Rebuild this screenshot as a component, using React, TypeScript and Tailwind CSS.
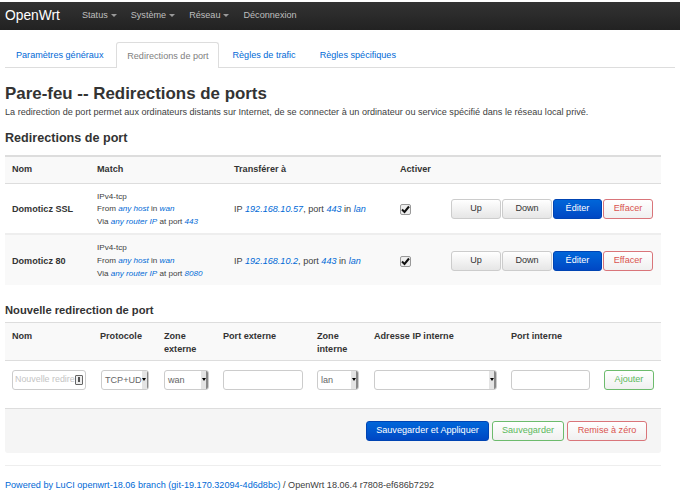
import type { ReactNode } from 'react';

const navItems = [
  { label: 'Status', caret: true },
  { label: 'Système', caret: true },
  { label: 'Réseau', caret: true },
  { label: 'Déconnexion', caret: false },
];

const rules = [
  { name: 'Domoticz SSL', port: '443', ip: '192.168.10.57' },
  { name: 'Domoticz 80', port: '8080', ip: '192.168.10.2' },
];

const btnBase =
  'flex h-[20px] items-center justify-center rounded-[3px] border text-[9.1px] leading-none';
const btnDefault = `${btnBase} border-[#ccc] bg-gradient-to-b from-white to-[#e6e6e6] text-[#333]`;
const btnBlue = `${btnBase} border-[#0044b3] bg-gradient-to-b from-[#0066d9] to-[#0047c4] text-white`;
const btnRed = `${btnBase} border-[#d9757a] bg-gradient-to-b from-white to-[#f0f0f0] text-[#d9534f]`;
const btnGreen = `${btnBase} border-[#6dbb6d] bg-gradient-to-b from-white to-[#f0f0f0] text-[#5cb85c]`;

function Em({ children }: { children: ReactNode }) {
  return <em className="text-[#0069d6]">{children}</em>;
}

function Check() {
  return (
    <div className="flex h-[11px] w-[11px] items-center justify-center rounded-[2px] border border-[#999] bg-[#eee]">
      <svg width="9" height="9" viewBox="0 0 9 9">
        <path d="M1 4.5 L3.5 7 L8 1.5" fill="none" stroke="#111" strokeWidth="2" />
      </svg>
    </div>
  );
}

function FakeSelect({ text, width }: { text: string; width: string }) {
  return (
    <div className={`flex h-[20px] items-stretch overflow-hidden rounded-[3px] border border-[#ccc] bg-white ${width}`}>
      <span className="flex-1 whitespace-nowrap pl-[3px] text-[9.1px] leading-[19px] text-[#666]">{text}</span>
      <span className="flex w-[7px] shrink-0 items-center justify-center border-r-2 border-[#888] bg-[#e4e4e4]">
        <span className="h-0 w-0 border-x-[2px] border-t-[3px] border-x-transparent border-t-black" />
      </span>
    </div>
  );
}

const inputCls = 'h-[20px] rounded-[3px] border border-[#ccc] bg-white';
const thCls = 'px-[7px] pt-[7px] text-left align-top text-[9.1px] font-bold leading-[12.5px] text-[#333]';
const headCls = 'px-[7px] text-left text-[9.1px] font-bold text-[#333]';

export default function App() {
  return (
    <div className="h-[500px] w-[680px] overflow-hidden bg-white font-['Liberation_Sans',sans-serif] text-[#404040]">
      {/* Top bar */}
      <div className="mt-[2px] flex h-[28px] items-center bg-gradient-to-b from-[#333] to-[#222] pl-[5px]">
        <span className="mr-[22px] text-[13.8px] leading-none text-white">OpenWrt</span>
        <div className="flex gap-[14px]">
          {navItems.map((item) => (
            <span key={item.label} className="flex items-center gap-[3px] text-[9.1px] text-[#bfbfbf]">
              {item.label}
              {item.caret && <span className="h-0 w-0 border-x-[3px] border-t-[3px] border-x-transparent border-t-[#999]" />}
            </span>
          ))}
        </div>
      </div>

      {/* Tabs */}
      <div className="mx-[5px] mt-[12px] flex h-[26px] border-b border-[#ddd] text-[9.1px]">
        <span className="ml-[11px] mt-[7px] text-[#0069d6]">Paramètres généraux</span>
        <span className="ml-[13px] h-[26px] w-[103px] rounded-t-[3px] border border-b-0 border-[#ddd] bg-white pt-[7px] text-center text-[#808080]">Redirections de port</span>
        <span className="ml-[13px] mt-[7px] text-[#0069d6]">Règles de trafic</span>
        <span className="ml-[24px] mt-[7px] text-[#0069d6]">Règles spécifiques</span>
      </div>

      <h1 className="mx-[5px] mt-[14px] text-[16.9px] font-bold leading-[24px] text-[#333]">Pare-feu -- Redirections de ports</h1>
      <p className="mx-[5px] whitespace-nowrap text-[9.1px] leading-[13px] text-[#404040]">
        La redirection de port permet aux ordinateurs distants sur Internet, de se connecter à un ordinateur ou service spécifié dans le réseau local privé.
      </p>

      <h3 className="mx-[5px] mt-[10px] text-[12.6px] font-bold leading-[18px] text-[#333]">Redirections de port</h3>

      {/* Rules table */}
      <table className="ml-[5px] mt-[8px] w-[656px] table-fixed border-collapse">
        <colgroup>
          <col className="w-[85px]" />
          <col className="w-[137px]" />
          <col className="w-[166px]" />
          <col className="w-[51px]" />
          <col />
        </colgroup>
        <thead>
          <tr className="h-[27px] border-y-2 border-[#ddd] border-b-[1px] bg-[#f9f9f9]">
            <th className={headCls}>Nom</th>
            <th className={headCls}>Match</th>
            <th className={headCls}>Transférer à</th>
            <th className={headCls}>Activer</th>
            <th />
          </tr>
        </thead>
        <tbody>
          {rules.map((rule, i) => (
            <tr key={rule.name} className={i === 1 ? 'h-[51px] bg-[#f9f9f9]' : 'h-[51px] border-b-2 border-[#eee]'}>
              <td className="px-[7px] pt-[3px] text-[9.1px] font-bold text-[#333]">{rule.name}</td>
              <td className="px-[7px] pt-[3px] text-[8.1px] leading-[12.7px]">
                <div>IPv4-tcp</div>
                <div>From <Em>any host</Em> in <Em>wan</Em></div>
                <div className="whitespace-nowrap">Via <Em>any router IP</Em> at port <Em>{rule.port}</Em></div>
              </td>
              <td className="whitespace-nowrap px-[7px] pt-[3px] text-[9.1px]">
                IP <Em>{rule.ip}</Em>, port <Em>443</Em> in <Em>lan</Em>
              </td>
              <td className="px-[7px] pt-[3px]"><Check /></td>
              <td className="px-[7px] pt-[1px]">
                <div className="flex gap-[1px]">
                  <span className={`${btnDefault} w-[50px]`}>Up</span>
                  <span className={`${btnDefault} w-[50px]`}>Down</span>
                  <span className={`${btnBlue} w-[49px]`}>Éditer</span>
                  <span className={`${btnRed} w-[50px]`}>Effacer</span>
                </div>
              </td>
            </tr>
          ))}
        </tbody>
      </table>

      <h3 className="mx-[5px] mt-[17px] text-[11.2px] font-bold leading-[16px] text-[#333]">Nouvelle redirection de port</h3>

      {/* New rule table */}
      <table className="ml-[5px] mt-[4px] w-[656px] table-fixed border-collapse">
        <colgroup>
          <col className="w-[88px]" />
          <col className="w-[64px]" />
          <col className="w-[59px]" />
          <col className="w-[94px]" />
          <col className="w-[57px]" />
          <col className="w-[137px]" />
          <col className="w-[93px]" />
          <col />
        </colgroup>
        <thead>
          <tr className="h-[38px] border-y border-[#ddd] bg-[#f9f9f9]">
            <th className={thCls}>Nom</th>
            <th className={thCls}>Protocole</th>
            <th className={thCls}>Zone externe</th>
            <th className={thCls}>Port externe</th>
            <th className={thCls}>Zone interne</th>
            <th className={thCls}>Adresse IP interne</th>
            <th className={thCls}>Port interne</th>
            <th />
          </tr>
        </thead>
        <tbody>
          <tr className="h-[38px]">
            <td className="px-[7px]">
              <div className={`${inputCls} flex w-[74px] items-center justify-between pl-[2px] pr-[2px]`}>
                <span className="whitespace-nowrap text-[8.9px] text-[#c4c4c4]">Nouvelle redire</span>
                <span className="flex h-[10px] w-[8px] shrink-0 items-center justify-center rounded-[1px] border border-[#666] bg-[#eee]">
                  <span className="h-[5px] w-[2px] bg-[#555]" />
                </span>
              </div>
            </td>
            <td className="pl-[8px]"><FakeSelect text="TCP+UD" width="w-[48px]" /></td>
            <td className="pl-[7px]"><FakeSelect text="wan" width="w-[45px]" /></td>
            <td className="px-[7px]"><div className={`${inputCls} w-[80px]`} /></td>
            <td className="px-[7px]"><FakeSelect text="lan" width="w-[42px]" /></td>
            <td className="px-[7px]"><FakeSelect text="" width="w-[123px]" /></td>
            <td className="px-[7px]"><div className={`${inputCls} w-[79px]`} /></td>
            <td className="pl-[7px]"><span className={`${btnGreen} w-[50px]`}>Ajouter</span></td>
          </tr>
        </tbody>
      </table>

      {/* Action bar */}
      <div className="mx-[5px] mt-[9px] flex h-[45px] w-[656px] items-center justify-end gap-[3px] rounded-b-[3px] border-t border-[#ddd] bg-[#f5f5f5] pr-[14px]">
        <span className={`${btnBlue} w-[123px]`}>Sauvegarder et Appliquer</span>
        <span className={`${btnGreen} w-[72px]`}>Sauvegarder</span>
        <span className={`${btnRed} w-[80px]`}>Remise à zéro</span>
      </div>

      <div className="mx-[5px] mt-[12px] w-[656px] border-t border-[#eee] pt-[13px] text-[9.1px] leading-[13px] text-[#404040]">
        <span className="text-[#0069d6]">Powered by LuCI openwrt-18.06 branch (git-19.170.32094-4d6d8bc)</span> / OpenWrt 18.06.4 r7808-ef686b7292
      </div>
    </div>
  );
}
